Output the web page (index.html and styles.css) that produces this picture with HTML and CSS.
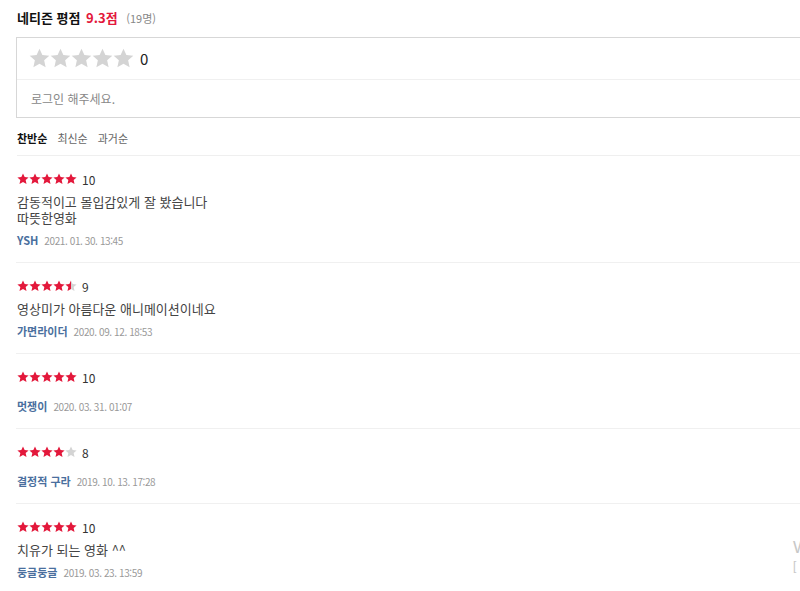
FILE: index.html
```html
<!DOCTYPE html>
<html lang="ko">
<head>
<meta charset="utf-8">
<title>네티즌 평점</title>
<link rel="stylesheet" href="styles.css">
</head>
<body>
<svg width="0" height="0" class="defs" aria-hidden="true">
  <defs>
    <path id="star" d="M12 0.8l3.3 7.2 7.9.8-5.9 5.3 1.7 7.8L12 17.9l-7 4 1.7-7.8L0.8 8.8l7.9-.8z"/>
    <linearGradient id="half">
      <stop offset="50%" stop-color="#e3183b"/>
      <stop offset="50%" stop-color="#d4d4d4"/>
    </linearGradient>
  </defs>
</svg>
<div class="page">
  <main class="main">
    <h2 class="title">네티즌 평점 <em class="score">9.3점</em> <span class="count">(19명)</span></h2>

    <section class="rate-box">
      <div class="rate-row">
        <span class="stars big">
          <svg viewBox="0 0 24 24"><use href="#star"/></svg><svg viewBox="0 0 24 24"><use href="#star"/></svg><svg viewBox="0 0 24 24"><use href="#star"/></svg><svg viewBox="0 0 24 24"><use href="#star"/></svg><svg viewBox="0 0 24 24"><use href="#star"/></svg>
        </span>
        <span class="rate-num">0</span>
      </div>
      <div class="login-row">로그인 해주세요.</div>
    </section>

    <nav class="sort">
      <a class="sort-item active">찬반순</a>
      <a class="sort-item">최신순</a>
      <a class="sort-item">과거순</a>
    </nav>

    <ul class="reviews">
      <li class="review">
        <div class="review-rate">
          <span class="stars red"><svg viewBox="0 0 24 24"><use href="#star"/></svg><svg viewBox="0 0 24 24"><use href="#star"/></svg><svg viewBox="0 0 24 24"><use href="#star"/></svg><svg viewBox="0 0 24 24"><use href="#star"/></svg><svg viewBox="0 0 24 24"><use href="#star"/></svg></span>
          <span class="num">10</span>
        </div>
        <p class="review-text">감동적이고 몰입감있게 잘 봤습니다<br>따뜻한영화</p>
        <div class="review-meta"><a class="name">YSH</a> <span class="date">2021. 01. 30. 13:45</span></div>
      </li>
      <li class="review">
        <div class="review-rate">
          <span class="stars red"><svg viewBox="0 0 24 24"><use href="#star"/></svg><svg viewBox="0 0 24 24"><use href="#star"/></svg><svg viewBox="0 0 24 24"><use href="#star"/></svg><svg viewBox="0 0 24 24"><use href="#star"/></svg><svg viewBox="0 0 24 24" class="half"><use href="#star"/></svg></span>
          <span class="num">9</span>
        </div>
        <p class="review-text">영상미가 아름다운 애니메이션이네요</p>
        <div class="review-meta"><a class="name">가면라이더</a> <span class="date">2020. 09. 12. 18:53</span></div>
      </li>
      <li class="review">
        <div class="review-rate">
          <span class="stars red"><svg viewBox="0 0 24 24"><use href="#star"/></svg><svg viewBox="0 0 24 24"><use href="#star"/></svg><svg viewBox="0 0 24 24"><use href="#star"/></svg><svg viewBox="0 0 24 24"><use href="#star"/></svg><svg viewBox="0 0 24 24"><use href="#star"/></svg></span>
          <span class="num">10</span>
        </div>
        <div class="review-meta"><a class="name">멋쟁이</a> <span class="date">2020. 03. 31. 01:07</span></div>
      </li>
      <li class="review">
        <div class="review-rate">
          <span class="stars red"><svg viewBox="0 0 24 24"><use href="#star"/></svg><svg viewBox="0 0 24 24"><use href="#star"/></svg><svg viewBox="0 0 24 24"><use href="#star"/></svg><svg viewBox="0 0 24 24"><use href="#star"/></svg><svg viewBox="0 0 24 24" class="off"><use href="#star"/></svg></span>
          <span class="num">8</span>
        </div>
        <div class="review-meta"><a class="name">결정적 구라</a> <span class="date">2019. 10. 13. 17:28</span></div>
      </li>
      <li class="review">
        <div class="review-rate">
          <span class="stars red"><svg viewBox="0 0 24 24"><use href="#star"/></svg><svg viewBox="0 0 24 24"><use href="#star"/></svg><svg viewBox="0 0 24 24"><use href="#star"/></svg><svg viewBox="0 0 24 24"><use href="#star"/></svg><svg viewBox="0 0 24 24"><use href="#star"/></svg></span>
          <span class="num">10</span>
        </div>
        <p class="review-text">치유가 되는 영화 ^^</p>
        <div class="review-meta"><a class="name">둥글둥글</a> <span class="date">2019. 03. 23. 13:59</span></div>
      </li>
    </ul>
  </main>
  <div class="side-peek" aria-hidden="true">
    <span class="peek-big">W</span>
    <span class="peek-small">[</span>
  </div>
</div>
</body>
</html>
```

FILE: styles.css
```css
html, body {
  margin: 0;
  padding: 0;
  background: #fff;
  overflow: hidden;
}
body {
  font-family: "Noto Sans CJK KR", "Noto Sans", "Liberation Sans", sans-serif;
  color: #333;
  width: 800px;
  height: 591px;
}
.defs { position: absolute; }
.page {
  position: relative;
  width: 800px;
  height: 591px;
  overflow: hidden;
}
.main {
  width: 1000px;
  padding: 8px 0 0 16px;
}
.title {
  margin: 0 0 0 1px;
  font-size: 13px;
  line-height: 20px;
  font-weight: 700;
  color: #111;
}
.score {
  font-style: normal;
  color: #e3183b;
  margin-left: 2px;
}
.count {
  margin-left: 5px;
  font-size: 11px;
  font-weight: 400;
  color: #888;
}
.rate-box {
  margin-top: 9px;
  border: 1px solid #d7d7d7;
}
.rate-row {
  height: 41px;
  display: flex;
  align-items: center;
  padding-left: 12px;
  border-bottom: 1px solid #f0f0f0;
}
.stars {
  display: inline-flex;
}
.stars svg { display: block; }
.stars.big svg {
  width: 21px;
  height: 21px;
  fill: #d4d4d4;
}
.rate-num {
  margin-left: 6px;
  font-size: 15px;
  color: #222;
  line-height: 1;
}
.login-row {
  height: 37px;
  display: flex;
  align-items: center;
  padding-left: 14px;
  font-size: 12px;
  color: #888;
}
.sort {
  display: flex;
  gap: 10px;
  margin: 11px 0 0 1px;
  padding-bottom: 8px;
  border-bottom: 1px solid #efefef;
  line-height: 18px;
  font-size: 11px;
}
.sort-item {
  color: #666;
  cursor: pointer;
}
.sort-item.active {
  color: #111;
  font-weight: 700;
}
.reviews {
  list-style: none;
  margin: 0;
  padding: 0;
}
.review {
  padding: 15px 0 13px 1px;
  border-bottom: 1px solid #f0f0f0;
}
.review-rate {
  display: flex;
  align-items: center;
  height: 16px;
}
.stars.red svg {
  width: 12px;
  height: 12px;
  fill: #e3183b;
}
.stars.red svg.half { fill: url(#half); }
.stars.red svg.off { fill: #d4d4d4; }
.num {
  margin-left: 5px;
  font-size: 12px;
  color: #333;
}
.review-text {
  margin: 7px 0 6px;
  font-size: 13px;
  line-height: 16px;
  color: #444;
}
.review-rate + .review-meta {
  margin-top: 13px;
}
.review-meta {
  line-height: 16px;
  display: flex;
  align-items: baseline;
  gap: 6px;
}
.name {
  font-size: 11px;
  font-weight: 700;
  color: #4a6f9e;
}
.date {
  font-size: 10px;
  letter-spacing: -0.4px;
  color: #999;
}
.side-peek {
  position: absolute;
  left: 793px;
  top: 537px;
  display: flex;
  flex-direction: column;
  color: #c8c8c8;
  font-family: "Liberation Sans", sans-serif;
}
.peek-big { font-size: 17px; line-height: 22px; }
.peek-small { font-size: 12px; line-height: 14px; }
```
